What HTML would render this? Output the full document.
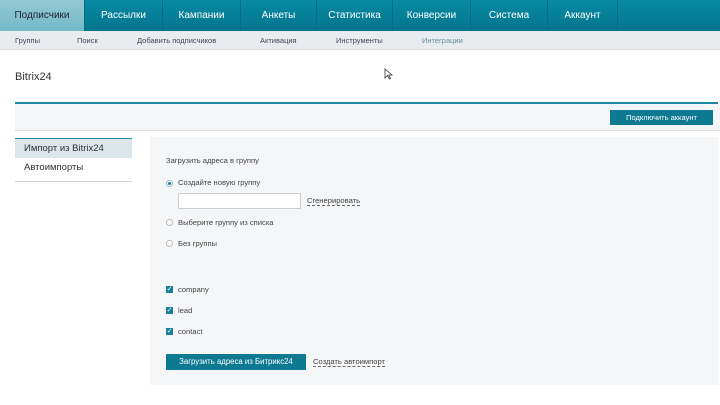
<!DOCTYPE html><html><head><meta charset="utf-8"><style>
*{margin:0;padding:0;box-sizing:border-box}
body{width:720px;height:405px;background:#fff;font-family:"Liberation Sans",sans-serif;position:relative;overflow:hidden;color:#333}
.a{position:absolute;white-space:nowrap}
.nav{left:0;top:0;width:720px;height:31px;background:linear-gradient(#088aa3,#04758d)}
.tab{position:absolute;top:0;height:31px;line-height:31px;text-align:center;color:#fff;font-size:10px;border-right:1px solid #066c82}
.sub{left:0;top:31px;width:720px;height:19px;background:#e8ecef;border-bottom:1px solid #d4d8db}
.sub span{position:absolute;top:5px;font-size:7.5px;color:#445}
.lbl{font-size:7.6px;color:#444}
.rad{width:7px;height:7px;border:1px solid #bbb;border-radius:50%;background:#fff}
.chk{width:7px;height:7px;background:#1a7f9a;color:#fff;font-size:7px;line-height:7px;text-align:center}
</style></head><body>
<div class="a nav">
<div class="tab" style="left:0;width:85px;background:linear-gradient(#93c9d3,#74b9c6);color:#223">Подписчики</div>
<div class="tab" style="left:85px;width:78px">Рассылки</div>
<div class="tab" style="left:163px;width:78px">Кампании</div>
<div class="tab" style="left:241px;width:76px">Анкеты</div>
<div class="tab" style="left:317px;width:76px">Статистика</div>
<div class="tab" style="left:393px;width:78px">Конверсии</div>
<div class="tab" style="left:471px;width:77px">Система</div>
<div class="tab" style="left:548px;width:70px">Аккаунт</div>
</div>
<div class="a sub">
<span style="left:15px">Группы</span><span style="left:77px">Поиск</span><span style="left:137px">Добавить подписчиков</span><span style="left:260px">Активация</span><span style="left:336px">Инструменты</span><span style="left:422px;color:#6a8a99">Интеграции</span>
</div>
<div class="a" style="left:15px;top:71px;font-size:11px;color:#333">Bitrix24</div>
<svg class="a" style="left:384px;top:68px" width="9" height="12" viewBox="0 0 9 12"><path d="M1 1 L1 10 L3.5 7.5 L5.5 11 L6.5 10.5 L4.8 7 L8 7 Z" fill="#fff" stroke="#333" stroke-width="0.8"/></svg>
<div class="a" style="left:15px;top:102px;width:703px;height:2px;background:#1a8aa3"></div>
<div class="a" style="left:15px;top:104px;width:705px;height:27px;background:#f5f6f7;border-bottom:1px solid #d8dcdf"></div>
<div class="a" style="left:610px;top:110px;width:103px;height:15px;background:#0e7a92;color:#fff;font-size:7.5px;line-height:15px;text-align:center">Подключить аккаунт</div>
<div class="a" style="left:15px;top:138px;width:117px;height:44px;border-top:1px solid #1a8aa3;border-bottom:1px solid #cdd3d6"></div>
<div class="a" style="left:15px;top:139px;width:117px;height:19px;background:#dce5e9;font-size:9.5px;line-height:19px;padding-left:9px;color:#333">Импорт из Bitrix24</div>
<div class="a" style="left:24px;top:162px;font-size:9.5px;color:#333">Автоимпорты</div>
<div class="a" style="left:150px;top:137px;width:568px;height:248px;background:#f5f6f8"></div>
<div class="a lbl" style="left:166px;top:156px">Загрузить адреса в группу</div>
<div class="a rad" style="left:166px;top:180px;border-color:#9bc"><div style="width:3px;height:3px;background:#1a7f9a;border-radius:50%;margin:1px"></div></div>
<div class="a lbl" style="left:178px;top:178px">Создайте новую группу</div>
<div class="a" style="left:178px;top:193px;width:123px;height:16px;background:#fff;border:1px solid #ccc"></div>
<div class="a lbl" style="left:307px;top:196px;border-bottom:1px dashed #666">Сгенерировать</div>
<div class="a rad" style="left:166px;top:219px"></div>
<div class="a lbl" style="left:178px;top:218px">Выберите группу из списка</div>
<div class="a rad" style="left:166px;top:240px"></div>
<div class="a lbl" style="left:178px;top:239px">Без группы</div>
<div class="a chk" style="left:166px;top:286px">✓</div><div class="a lbl" style="left:178px;top:285px">company</div>
<div class="a chk" style="left:166px;top:307px">✓</div><div class="a lbl" style="left:178px;top:306px">lead</div>
<div class="a chk" style="left:166px;top:328px">✓</div><div class="a lbl" style="left:178px;top:327px">contact</div>
<div class="a" style="left:166px;top:354px;width:140px;height:16px;background:#0e7a92;color:#fff;font-size:7.8px;line-height:16px;text-align:center">Загрузить адреса из Битрикс24</div>
<div class="a lbl" style="left:313px;top:357px;border-bottom:1px dashed #666">Создать автоимпорт</div>
</body></html>
